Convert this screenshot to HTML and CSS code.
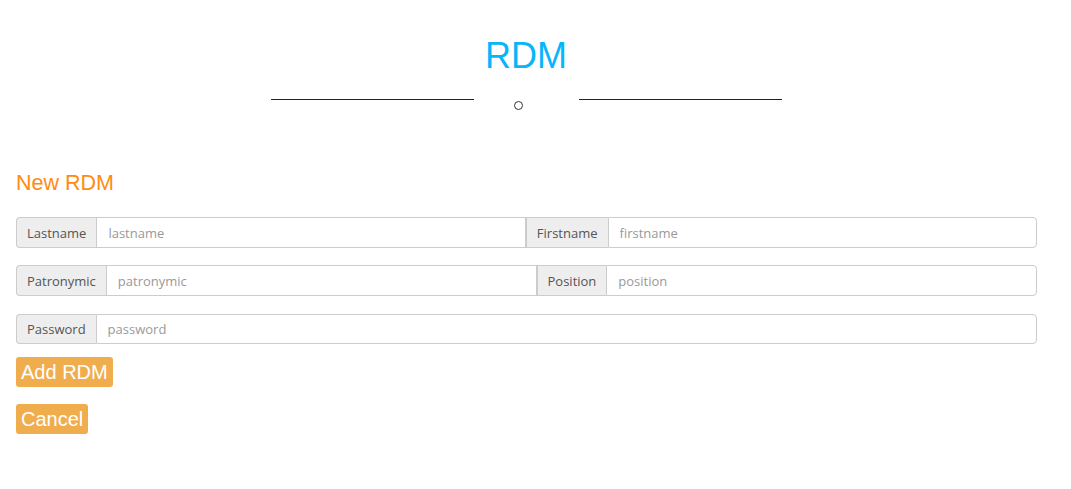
FILE: index.html
```html
<!DOCTYPE html>
<html>
<head>
<meta charset="utf-8">
<link rel="stylesheet" href="styles.css">
</head>
<body>
<header class="hero">
  <h1 class="title">RDM</h1>
  <div class="divider">
    <span class="rule"></span>
    <span class="dot"></span>
    <span class="rule"></span>
  </div>
</header>
<main class="content">
  <h2 class="subtitle">New RDM</h2>
  <form class="form">
    <div class="group">
      <span class="addon">Lastname</span>
      <input class="field" type="text" placeholder="lastname">
      <span class="addon">Firstname</span>
      <input class="field" type="text" placeholder="firstname">
    </div>
    <div class="group">
      <span class="addon">Patronymic</span>
      <input class="field" type="text" placeholder="patronymic">
      <span class="addon">Position</span>
      <input class="field" type="text" placeholder="position">
    </div>
    <div class="group">
      <span class="addon">Password</span>
      <input class="field" type="password" placeholder="password">
    </div>
    <div class="actions">
      <button type="button" class="btn">Add RDM</button>
      <button type="button" class="btn">Cancel</button>
    </div>
  </form>
</main>
</body>
</html>
```

FILE: styles.css
```css
html, body {
  margin: 0;
  padding: 0;
  background: #fff;
}
body {
  font-family: "Liberation Sans", Arial, sans-serif;
  color: #333;
}
.hero {
  display: flex;
  flex-direction: column;
  align-items: center;
  padding-top: 35px;
  padding-right: 19px;
}
.title {
  margin: 0;
  font-weight: normal;
  font-size: 36px;
  line-height: 42px;
  color: #08b5fc;
}
.divider {
  display: flex;
  align-items: flex-start;
  margin-top: 22px;
  width: 511px;
}
.rule {
  display: block;
  width: 203px;
  height: 1px;
  background: #222;
}
.dot {
  display: block;
  box-sizing: border-box;
  width: 9px;
  height: 9px;
  border: 1.3px solid #333;
  border-radius: 50%;
  margin: 2px auto 0;
  position: relative;
  left: -8px;
}
.content {
  padding: 0 16px;
  margin-top: 60px;
}
.subtitle {
  margin: 0 0 21px;
  font-weight: normal;
  font-size: 21.5px;
  line-height: 26px;
  color: #ff8b14;
}
.form {
  width: 1021px;
  display: flex;
  flex-direction: column;
}
.group {
  display: flex;
  height: 31px;
  margin-bottom: 17px;
  font-family: "Open Sans", "Noto Sans", sans-serif;
  font-size: 13px;
}
.group:nth-child(2) {
  margin-bottom: 18px;
}
.group:nth-child(3) {
  height: 30px;
  margin-bottom: 13px;
}
.addon {
  display: flex;
  align-items: center;
  padding: 0 10px;
  background: #eee;
  color: #555;
  border: 1px solid #ccc;
  border-right: none;
  white-space: nowrap;
}
.addon:first-child {
  border-radius: 4px 0 0 4px;
}
.field {
  flex: 1;
  min-width: 0;
  box-sizing: border-box;
  height: 100%;
  border: 1px solid #ccc;
  padding: 0 11px;
  font-family: "Open Sans", "Noto Sans", sans-serif;
  font-size: 13px;
  color: #555;
  outline: none;
  margin: 0;
}
.field::placeholder {
  color: #999;
}
.field:last-child {
  border-radius: 0 4px 4px 0;
}
.actions {
  display: flex;
  flex-direction: column;
  align-items: flex-start;
  gap: 17px;
}
.btn {
  background: #f0ad4e;
  color: #fff;
  border: none;
  border-radius: 3px;
  font-family: "Liberation Sans", Arial, sans-serif;
  font-size: 20px;
  line-height: 30px;
  height: 30px;
  padding: 0 5px;
  margin: 0;
}
```
